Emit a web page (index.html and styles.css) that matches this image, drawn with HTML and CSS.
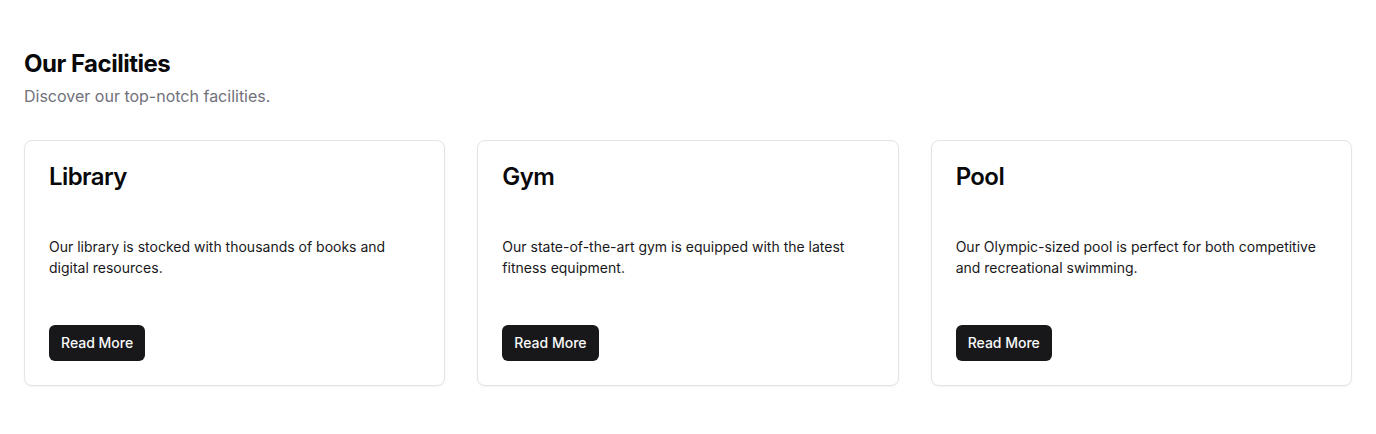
FILE: index.html
```html
<!DOCTYPE html>
<html lang="en">
<head>
<meta charset="utf-8">
<title>Our Facilities</title>
<link rel="stylesheet" href="styles.css">
</head>
<body>
<section class="facilities">
  <div class="intro">
    <h2 class="title">Our Facilities</h2>
    <p class="subtitle">Discover our top-notch facilities.</p>
  </div>
  <div class="grid">
    <div class="card">
      <div class="card-header"><h3 class="card-title">Library</h3></div>
      <div class="card-content"><p class="card-text">Our library is stocked with thousands of books and digital resources.</p></div>
      <div class="card-footer"><button class="btn">Read More</button></div>
    </div>
    <div class="card">
      <div class="card-header"><h3 class="card-title">Gym</h3></div>
      <div class="card-content"><p class="card-text">Our state-of-the-art gym is equipped with the latest fitness equipment.</p></div>
      <div class="card-footer"><button class="btn">Read More</button></div>
    </div>
    <div class="card">
      <div class="card-header"><h3 class="card-title">Pool</h3></div>
      <div class="card-content"><p class="card-text">Our Olympic-sized pool is perfect for both competitive and recreational swimming.</p></div>
      <div class="card-footer"><button class="btn">Read More</button></div>
    </div>
  </div>
</section>
</body>
</html>
```
FILE: styles.css
```css
* { box-sizing: border-box; }
html, body { margin: 0; padding: 0; background: #ffffff; }
body { font-family: Inter, "Noto Sans", sans-serif; color: #09090b; }
.facilities { padding: 48px 24px; }
.intro { margin-bottom: 32px; }
.title { margin: 0; font-size: 24px; line-height: 32px; font-weight: 700; letter-spacing: -0.5px; }
.subtitle { margin: 4px 0 0; font-size: 16px; line-height: 24px; color: #71717a; }
.grid { display: grid; grid-template-columns: repeat(3, 1fr); gap: 32px; }
.card { border: 1px solid #e4e4e7; border-radius: 8px; background: #fff; box-shadow: 0 1px 2px rgba(0,0,0,0.05); display: flex; flex-direction: column; }
.card-header { padding: 24px 24px 0; }
.card-title { margin: 0; font-size: 24px; line-height: 24px; font-weight: 600; letter-spacing: -0.6px; }
.card-content { padding: 48px 24px 0; flex: 1; }
.card-text { margin: 0; font-size: 14px; line-height: 20.5px; color: #18181b; }
.card-footer { padding: 47px 24px 24px; }
.btn { font-family: inherit; font-size: 14px; font-weight: 500; line-height: 20px; color: #fafafa; background: #18181b; border: none; border-radius: 6px; height: 36px; padding: 8px 12px; cursor: pointer; }
```
